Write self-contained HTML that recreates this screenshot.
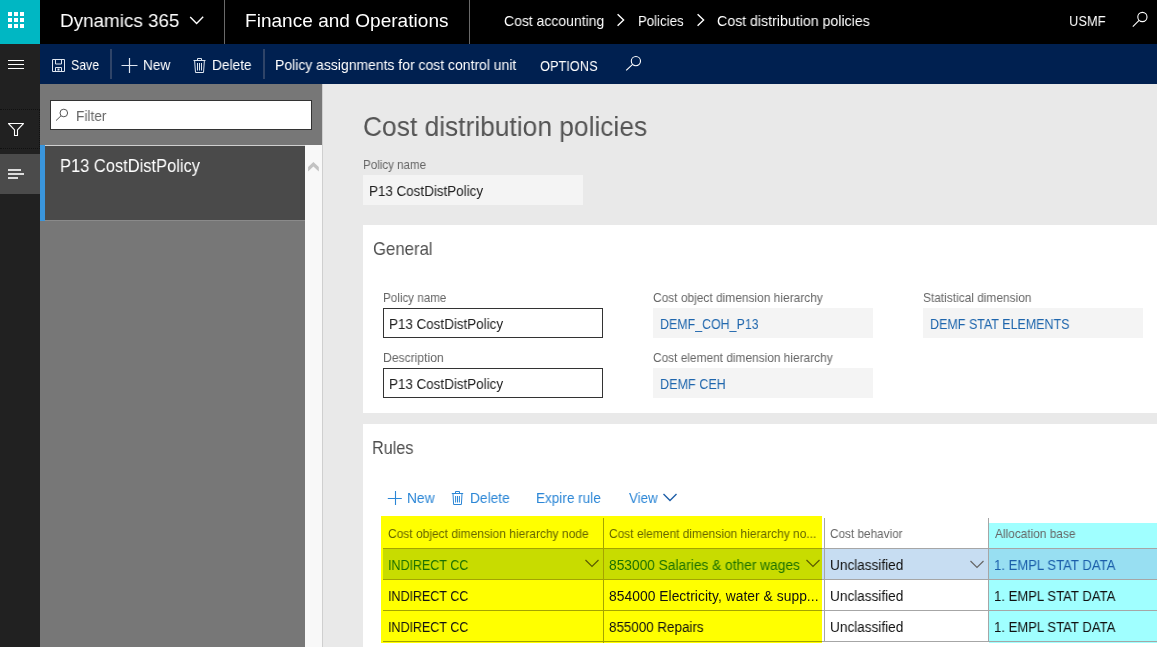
<!DOCTYPE html>
<html><head><meta charset="utf-8"><title>Cost distribution policies</title>
<style>
html,body{margin:0;padding:0;}
body{width:1157px;height:647px;overflow:hidden;position:relative;background:#e9e9e9;font-family:"Liberation Sans",sans-serif;}
.b{position:absolute;display:block;}
.t{position:absolute;white-space:nowrap;will-change:transform;}
</style></head><body>
<div class="b" style="left:0px;top:0px;width:1157px;height:44px;background:#000;"></div>
<div class="b" style="left:0px;top:0px;width:40px;height:44px;background:#00b7c3;"></div>
<svg class="b" style="left:0px;top:0px" width="40" height="44" viewBox="0 0 40 44"><rect x="8" y="12" width="4" height="4" fill="#fff"/><rect x="8" y="18" width="4" height="4" fill="#fff"/><rect x="8" y="24" width="4" height="4" fill="#fff"/><rect x="14" y="12" width="4" height="4" fill="#fff"/><rect x="14" y="18" width="4" height="4" fill="#fff"/><rect x="14" y="24" width="4" height="4" fill="#fff"/><rect x="20" y="12" width="4" height="4" fill="#fff"/><rect x="20" y="18" width="4" height="4" fill="#fff"/><rect x="20" y="24" width="4" height="4" fill="#fff"/></svg>
<div class="t" style="left:59.81px;top:10px;font-size:19px;line-height:21px;color:#fff;letter-spacing:0.000px;transform:scaleX(0.9922);transform-origin:0 0;">Dynamics 365</div>
<svg class="b" style="left:185px;top:8px" width="24" height="24" viewBox="0 0 24 24"><path d="M5.2 9 L11.6 15.4 L18.2 8.8" fill="none" stroke="#fff" stroke-width="1.4"/></svg>
<div class="b" style="left:224px;top:0px;width:1px;height:44px;background:#6a6a6a;"></div>
<div class="t" style="left:244.50px;top:10px;font-size:19px;line-height:21px;color:#fff;letter-spacing:0.033px;transform:scaleX(1.0000);transform-origin:0 0;">Finance and Operations</div>
<div class="b" style="left:469px;top:0px;width:1px;height:44px;background:#6a6a6a;"></div>
<div class="t" style="left:503.67px;top:13px;font-size:14.4px;line-height:16px;color:#fff;letter-spacing:0.000px;transform:scaleX(0.9707);transform-origin:0 0;">Cost accounting</div>
<svg class="b" style="left:612px;top:10px" width="16" height="20" viewBox="0 0 16 20"><path d="M5.6 4.2 L11.6 10 L5.6 15.8" fill="none" stroke="#fff" stroke-width="1.4"/></svg>
<div class="t" style="left:637.77px;top:13px;font-size:14.4px;line-height:16px;color:#fff;letter-spacing:0.000px;transform:scaleX(0.9191);transform-origin:0 0;">Policies</div>
<svg class="b" style="left:692px;top:10px" width="16" height="20" viewBox="0 0 16 20"><path d="M5.6 4.2 L11.6 10 L5.6 15.8" fill="none" stroke="#fff" stroke-width="1.4"/></svg>
<div class="t" style="left:717.36px;top:13px;font-size:14.4px;line-height:16px;color:#fff;letter-spacing:0.000px;transform:scaleX(0.9842);transform-origin:0 0;">Cost distribution policies</div>
<div class="t" style="left:1069.09px;top:13px;font-size:14.4px;line-height:16px;color:#fff;letter-spacing:0.000px;transform:scaleX(0.8946);transform-origin:0 0;">USMF</div>
<svg class="b" style="left:1128px;top:6px" width="24" height="24" viewBox="0 0 24 24"><circle cx="14.4" cy="11" r="4.6" fill="none" stroke="#fff" stroke-width="1.1"/><path d="M4.8 20.6 L11.1 14.3" stroke="#fff" stroke-width="1.1"/></svg>
<div class="b" style="left:0px;top:44px;width:40px;height:603px;background:#212121;"></div>
<svg class="b" style="left:0px;top:44px" width="40" height="40" viewBox="0 0 40 40"><path d="M8 16.5H24M8 20.5H24M8 24.5H24" stroke="#fff" stroke-width="1.1"/></svg>
<div class="b" style="left:0px;top:109px;width:40px;height:40px;background:transparent;border-top:1px dotted #111;border-bottom:1px dotted #111;border-right:1px dotted #111;box-sizing:border-box;"></div>
<svg class="b" style="left:0px;top:109px" width="40" height="40" viewBox="0 0 40 40"><path d="M8.5 14.5 H23.5 L17.5 20.8 V26.5 H14.5 V20.8 Z" fill="none" stroke="#fff" stroke-width="1.1" stroke-linejoin="round"/></svg>
<div class="b" style="left:0px;top:154px;width:40px;height:40px;background:#4b4b4b;"></div>
<svg class="b" style="left:0px;top:154px" width="40" height="40" viewBox="0 0 40 40"><path d="M8 16H21M8 20H24M8 24H18" stroke="#ddd" stroke-width="2"/></svg>
<div class="b" style="left:40px;top:44px;width:1117px;height:40px;background:#002050;"></div>
<svg class="b" style="left:48px;top:52px" width="24" height="24" viewBox="0 0 24 24"><path d="M4.5 7.5H16.5V19.5H4.5Z M7.5 7.5V12H13.5V7.5 M7.5 19.5V15.5H13.5V19.5" fill="none" stroke="#dfe6f0" stroke-width="1"/><rect x="9.5" y="16.5" width="2" height="2" fill="#dfe6f0"/></svg>
<div class="t" style="left:71.36px;top:57px;font-size:14.2px;line-height:16px;color:#fff;letter-spacing:0.000px;transform:scaleX(0.8675);transform-origin:0 0;">Save</div>
<div class="b" style="left:110px;top:49px;width:2px;height:30px;background:#2f4468;"></div>
<svg class="b" style="left:118px;top:54px" width="24" height="24" viewBox="0 0 24 24"><path d="M3.5 11.5H19.5M11.5 4V19" stroke="#dfe6f0" stroke-width="1.2"/></svg>
<div class="t" style="left:142.82px;top:57px;font-size:14.2px;line-height:16px;color:#fff;letter-spacing:0.000px;transform:scaleX(0.9571);transform-origin:0 0;">New</div>
<svg class="b" style="left:190px;top:54px" width="20" height="22" viewBox="0 0 20 22"><path d="M3.5 6.5H15.5 M7.5 6.5V4.5H11.5V6.5 M4.6 6.5L5.5 18.5H13.5L14.4 6.5 M7.5 9V16.5 M9.5 9V16.5 M11.5 9V16.5" fill="none" stroke="#dfe6f0" stroke-width="1"/></svg>
<div class="t" style="left:212.01px;top:57px;font-size:14.2px;line-height:16px;color:#fff;letter-spacing:0.000px;transform:scaleX(0.9651);transform-origin:0 0;">Delete</div>
<div class="b" style="left:263px;top:49px;width:2px;height:30px;background:#2f4468;"></div>
<div class="t" style="left:275.09px;top:57px;font-size:14.2px;line-height:16px;color:#fff;letter-spacing:0.000px;transform:scaleX(0.9840);transform-origin:0 0;">Policy assignments for cost control unit</div>
<div class="t" style="left:539.94px;top:58px;font-size:14.4px;line-height:16px;color:#fff;letter-spacing:0.000px;transform:scaleX(0.8899);transform-origin:0 0;">OPTIONS</div>
<svg class="b" style="left:620px;top:50px" width="24" height="24" viewBox="0 0 24 24"><circle cx="15.9" cy="11.1" r="4.6" fill="none" stroke="#fff" stroke-width="1.1"/><path d="M6.2 20.4 L12.6 14.4" stroke="#fff" stroke-width="1.1"/></svg>
<div class="b" style="left:40px;top:84px;width:282px;height:563px;background:#777777;"></div>
<div class="b" style="left:50px;top:100px;width:262px;height:30px;background:#fff;border:1px solid #333;box-sizing:border-box;"></div>
<svg class="b" style="left:50px;top:100px" width="24" height="30" viewBox="0 0 24 30"><circle cx="13.8" cy="13" r="3.8" fill="none" stroke="#555" stroke-width="1"/><path d="M6 20.6 L11 15.8" stroke="#555" stroke-width="1"/></svg>
<div class="t" style="left:75.81px;top:108px;font-size:14.2px;line-height:16px;color:#666;letter-spacing:0.000px;transform:scaleX(0.9653);transform-origin:0 0;">Filter</div>
<div class="b" style="left:40px;top:145px;width:265px;height:76px;background:#4a4a4a;"></div>
<div class="b" style="left:45px;top:145px;width:260px;height:1px;background:#d0d0d0;"></div>
<div class="b" style="left:45px;top:220px;width:260px;height:1px;background:#8a8a8a;"></div>
<div class="b" style="left:40px;top:145px;width:5px;height:76px;background:#3a96dd;"></div>
<div class="t" style="left:59.97px;top:155px;font-size:18.6px;line-height:21px;color:#fff;letter-spacing:0.000px;transform:scaleX(0.8855);transform-origin:0 0;">P13 CostDistPolicy</div>
<div class="b" style="left:305px;top:145px;width:17px;height:502px;background:#f8f8f8;"></div>
<svg class="b" style="left:305px;top:155px" width="17" height="20" viewBox="0 0 17 20"><path d="M3.1 12.1 L8.4 7 L13.8 12.1 V16.5 L8.4 11.4 L3.1 16.5Z" fill="#c2c2c2"/></svg>
<div class="b" style="left:322px;top:84px;width:1px;height:563px;background:#cfcfcf;"></div>
<div class="b" style="left:323px;top:84px;width:834px;height:563px;background:#e9e9e9;"></div>
<div class="t" style="left:363.28px;top:111px;font-size:27.5px;line-height:31px;color:#545454;letter-spacing:0.000px;transform:scaleX(0.9584);transform-origin:0 0;">Cost distribution policies</div>
<div class="t" style="left:363.28px;top:158px;font-size:12.6px;line-height:14px;color:#666;letter-spacing:0.000px;transform:scaleX(0.9204);transform-origin:0 0;">Policy name</div>
<div class="b" style="left:363px;top:175px;width:220px;height:30px;background:#f4f4f4;"></div>
<div class="t" style="left:369.01px;top:183px;font-size:13.9px;line-height:16px;color:#222;letter-spacing:0.000px;transform:scaleX(0.9653);transform-origin:0 0;">P13 CostDistPolicy</div>
<div class="b" style="left:363px;top:225px;width:794px;height:188px;background:#fff;"></div>
<div class="t" style="left:373.48px;top:239px;font-size:17.8px;line-height:20px;color:#505050;letter-spacing:0.000px;transform:scaleX(0.9423);transform-origin:0 0;">General</div>
<div class="t" style="left:383.46px;top:291px;font-size:12.4px;line-height:14px;color:#666;letter-spacing:0.000px;transform:scaleX(0.9397);transform-origin:0 0;">Policy name</div>
<div class="b" style="left:383px;top:308px;width:220px;height:30px;background:#fff;border:1px solid #333;box-sizing:border-box;"></div>
<div class="t" style="left:389.21px;top:316px;font-size:13.9px;line-height:16px;color:#222;letter-spacing:0.000px;transform:scaleX(0.9653);transform-origin:0 0;">P13 CostDistPolicy</div>
<div class="t" style="left:383.42px;top:351px;font-size:12.4px;line-height:14px;color:#666;letter-spacing:0.000px;transform:scaleX(0.9796);transform-origin:0 0;">Description</div>
<div class="b" style="left:383px;top:368px;width:220px;height:30px;background:#fff;border:1px solid #333;box-sizing:border-box;"></div>
<div class="t" style="left:389.21px;top:376px;font-size:13.9px;line-height:16px;color:#222;letter-spacing:0.000px;transform:scaleX(0.9653);transform-origin:0 0;">P13 CostDistPolicy</div>
<div class="t" style="left:653.30px;top:291px;font-size:12.4px;line-height:14px;color:#666;letter-spacing:0.000px;transform:scaleX(0.9631);transform-origin:0 0;">Cost object dimension hierarchy</div>
<div class="b" style="left:653px;top:308px;width:220px;height:30px;background:#f4f4f4;"></div>
<div class="t" style="left:660.22px;top:316px;font-size:14.2px;line-height:16px;color:#1f66ad;letter-spacing:0.000px;transform:scaleX(0.8753);transform-origin:0 0;">DEMF_COH_P13</div>
<div class="t" style="left:653.30px;top:351px;font-size:12.4px;line-height:14px;color:#666;letter-spacing:0.000px;transform:scaleX(0.9588);transform-origin:0 0;">Cost element dimension hierarchy</div>
<div class="b" style="left:653px;top:368px;width:220px;height:30px;background:#f4f4f4;"></div>
<div class="t" style="left:660.20px;top:376px;font-size:14.2px;line-height:16px;color:#1f66ad;letter-spacing:0.000px;transform:scaleX(0.8873);transform-origin:0 0;">DEMF CEH</div>
<div class="t" style="left:923.30px;top:291px;font-size:12.4px;line-height:14px;color:#666;letter-spacing:0.000px;transform:scaleX(0.9598);transform-origin:0 0;">Statistical dimension</div>
<div class="b" style="left:923px;top:308px;width:220px;height:30px;background:#f4f4f4;"></div>
<div class="t" style="left:930.21px;top:316px;font-size:14.2px;line-height:16px;color:#1f66ad;letter-spacing:0.000px;transform:scaleX(0.8807);transform-origin:0 0;">DEMF STAT ELEMENTS</div>
<div class="b" style="left:363px;top:424px;width:794px;height:223px;background:#fff;"></div>
<div class="t" style="left:372.45px;top:438px;font-size:18px;line-height:20px;color:#505050;letter-spacing:0.000px;transform:scaleX(0.9003);transform-origin:0 0;">Rules</div>
<svg class="b" style="left:384px;top:484px" width="24" height="24" viewBox="0 0 24 24"><path d="M3.8 14.5H17.8M11.5 7V21" stroke="#2b86d6" stroke-width="1.1"/></svg>
<div class="t" style="left:407.19px;top:490px;font-size:14px;line-height:16px;color:#2b86d6;letter-spacing:0.000px;transform:scaleX(0.9823);transform-origin:0 0;">New</div>
<svg class="b" style="left:448px;top:488px" width="20" height="20" viewBox="0 0 20 20"><path d="M3.8 5.5H15.2 M7.5 5.5V3.5H11.5V5.5 M5 5.5L5.6 16.5H13.4L14 5.5 M7.6 8V14.5 M9.5 8V14.5 M11.4 8V14.5" fill="none" stroke="#2b86d6" stroke-width="1"/></svg>
<div class="t" style="left:470.00px;top:490px;font-size:14px;line-height:16px;color:#2b86d6;letter-spacing:0.000px;transform:scaleX(0.9806);transform-origin:0 0;">Delete</div>
<div class="t" style="left:536.31px;top:490px;font-size:14px;line-height:16px;color:#2b86d6;letter-spacing:0.000px;transform:scaleX(0.9674);transform-origin:0 0;">Expire rule</div>
<div class="t" style="left:628.98px;top:490px;font-size:14px;line-height:16px;color:#2b86d6;letter-spacing:0.000px;transform:scaleX(0.9500);transform-origin:0 0;">View</div>
<svg class="b" style="left:660px;top:488px" width="20" height="16" viewBox="0 0 20 16"><path d="M3.5 6 L10 12.5 L16.5 6" fill="none" stroke="#1f5fa8" stroke-width="1.4"/></svg>
<div class="b" style="left:381px;top:516px;width:441px;height:127px;background:#ffff00;"></div>
<div class="b" style="left:989px;top:523px;width:168px;height:120px;background:#a0ffff;"></div>
<div class="b" style="left:383px;top:549px;width:220px;height:30px;background:#c8dc00;"></div>
<div class="b" style="left:604px;top:549px;width:218px;height:30px;background:#c8dc00;"></div>
<div class="b" style="left:825px;top:549px;width:163px;height:30px;background:#c7ddf2;"></div>
<div class="b" style="left:989px;top:549px;width:168px;height:30px;background:#98dff2;"></div>
<div class="b" style="left:383px;top:548px;width:439px;height:1px;background:#a4a400;"></div>
<div class="b" style="left:825px;top:548px;width:163px;height:1px;background:#a6a6a6;"></div>
<div class="b" style="left:989px;top:548px;width:168px;height:1px;background:#a6a6a6;"></div>
<div class="b" style="left:383px;top:579px;width:439px;height:1px;background:#a4a400;"></div>
<div class="b" style="left:825px;top:579px;width:163px;height:1px;background:#a6a6a6;"></div>
<div class="b" style="left:989px;top:579px;width:168px;height:1px;background:#a6a6a6;"></div>
<div class="b" style="left:383px;top:610px;width:439px;height:1px;background:#a4a400;"></div>
<div class="b" style="left:825px;top:610px;width:163px;height:1px;background:#a6a6a6;"></div>
<div class="b" style="left:989px;top:610px;width:168px;height:1px;background:#a6a6a6;"></div>
<div class="b" style="left:383px;top:641px;width:439px;height:1px;background:#a4a400;"></div>
<div class="b" style="left:825px;top:641px;width:163px;height:1px;background:#a6a6a6;"></div>
<div class="b" style="left:989px;top:641px;width:168px;height:1px;background:#a6a6a6;"></div>
<div class="b" style="left:822px;top:549px;width:2px;height:30px;background:#c7ddf2;"></div>
<div class="b" style="left:822px;top:548px;width:2px;height:1px;background:#a6a6a6;"></div>
<div class="b" style="left:822px;top:579px;width:2px;height:1px;background:#a6a6a6;"></div>
<div class="b" style="left:822px;top:610px;width:2px;height:1px;background:#a6a6a6;"></div>
<div class="b" style="left:822px;top:641px;width:2px;height:1px;background:#a6a6a6;"></div>
<div class="b" style="left:603px;top:518px;width:1px;height:125px;background:#a4a400;"></div>
<div class="b" style="left:824px;top:518px;width:1px;height:124px;background:#a6a6a6;"></div>
<div class="b" style="left:988px;top:518px;width:1px;height:124px;background:#a6a6a6;"></div>
<div class="t" style="left:388.20px;top:527px;font-size:12.4px;line-height:14px;color:#666600;letter-spacing:0.000px;transform:scaleX(0.9676);transform-origin:0 0;">Cost object dimension hierarchy node</div>
<div class="t" style="left:609.20px;top:527px;font-size:12.4px;line-height:14px;color:#666600;letter-spacing:0.000px;transform:scaleX(0.9645);transform-origin:0 0;">Cost element dimension hierarchy no...</div>
<div class="t" style="left:830.21px;top:527px;font-size:12.4px;line-height:14px;color:#666;letter-spacing:0.000px;transform:scaleX(0.9497);transform-origin:0 0;">Cost behavior</div>
<div class="t" style="left:994.80px;top:527px;font-size:12.4px;line-height:14px;color:#666;letter-spacing:0.000px;transform:scaleX(0.9571);transform-origin:0 0;">Allocation base</div>
<div class="t" style="left:388.38px;top:557px;font-size:13.9px;line-height:16px;color:#1a7000;letter-spacing:0.000px;transform:scaleX(0.8996);transform-origin:0 0;">INDIRECT CC</div>
<div class="t" style="left:609.18px;top:558px;font-size:13.8px;line-height:15px;color:#1a7000;letter-spacing:0.000px;transform:scaleX(0.9958);transform-origin:0 0;">853000 Salaries &amp; other wages</div>
<div class="t" style="left:829.81px;top:558px;font-size:13.8px;line-height:15px;color:#111;letter-spacing:0.000px;transform:scaleX(0.9855);transform-origin:0 0;">Unclassified</div>
<div class="t" style="left:994.46px;top:557px;font-size:13.9px;line-height:16px;color:#1b5eaa;letter-spacing:0.000px;transform:scaleX(0.9427);transform-origin:0 0;">1. EMPL STAT DATA</div>
<div class="t" style="left:388.38px;top:588px;font-size:13.9px;line-height:16px;color:#111;letter-spacing:0.000px;transform:scaleX(0.8996);transform-origin:0 0;">INDIRECT CC</div>
<div class="t" style="left:609.18px;top:589px;font-size:13.8px;line-height:15px;color:#111;letter-spacing:0.056px;transform:scaleX(1.0000);transform-origin:0 0;">854000 Electricity, water &amp; supp...</div>
<div class="t" style="left:829.81px;top:589px;font-size:13.8px;line-height:15px;color:#111;letter-spacing:0.000px;transform:scaleX(0.9855);transform-origin:0 0;">Unclassified</div>
<div class="t" style="left:994.46px;top:588px;font-size:13.9px;line-height:16px;color:#111;letter-spacing:0.000px;transform:scaleX(0.9427);transform-origin:0 0;">1. EMPL STAT DATA</div>
<div class="t" style="left:388.38px;top:619px;font-size:13.9px;line-height:16px;color:#111;letter-spacing:0.000px;transform:scaleX(0.8996);transform-origin:0 0;">INDIRECT CC</div>
<div class="t" style="left:609.19px;top:620px;font-size:13.8px;line-height:15px;color:#111;letter-spacing:0.000px;transform:scaleX(0.9708);transform-origin:0 0;">855000 Repairs</div>
<div class="t" style="left:829.81px;top:620px;font-size:13.8px;line-height:15px;color:#111;letter-spacing:0.000px;transform:scaleX(0.9855);transform-origin:0 0;">Unclassified</div>
<div class="t" style="left:994.46px;top:619px;font-size:13.9px;line-height:16px;color:#111;letter-spacing:0.000px;transform:scaleX(0.9427);transform-origin:0 0;">1. EMPL STAT DATA</div>
<svg class="b" style="left:580px;top:552px" width="24" height="20" viewBox="0 0 24 20"><path d="M5.5 8 L12 14.5 L18.5 8" fill="none" stroke="#5a5a00" stroke-width="1.2"/></svg>
<svg class="b" style="left:801px;top:552px" width="24" height="20" viewBox="0 0 24 20"><path d="M5.5 8 L12 14.5 L18.5 8" fill="none" stroke="#5a5a00" stroke-width="1.2"/></svg>
<svg class="b" style="left:965px;top:552px" width="24" height="20" viewBox="0 0 24 20"><path d="M5.5 9 L12 15.5 L18.5 9" fill="none" stroke="#666" stroke-width="1.2"/></svg>
</body></html>
